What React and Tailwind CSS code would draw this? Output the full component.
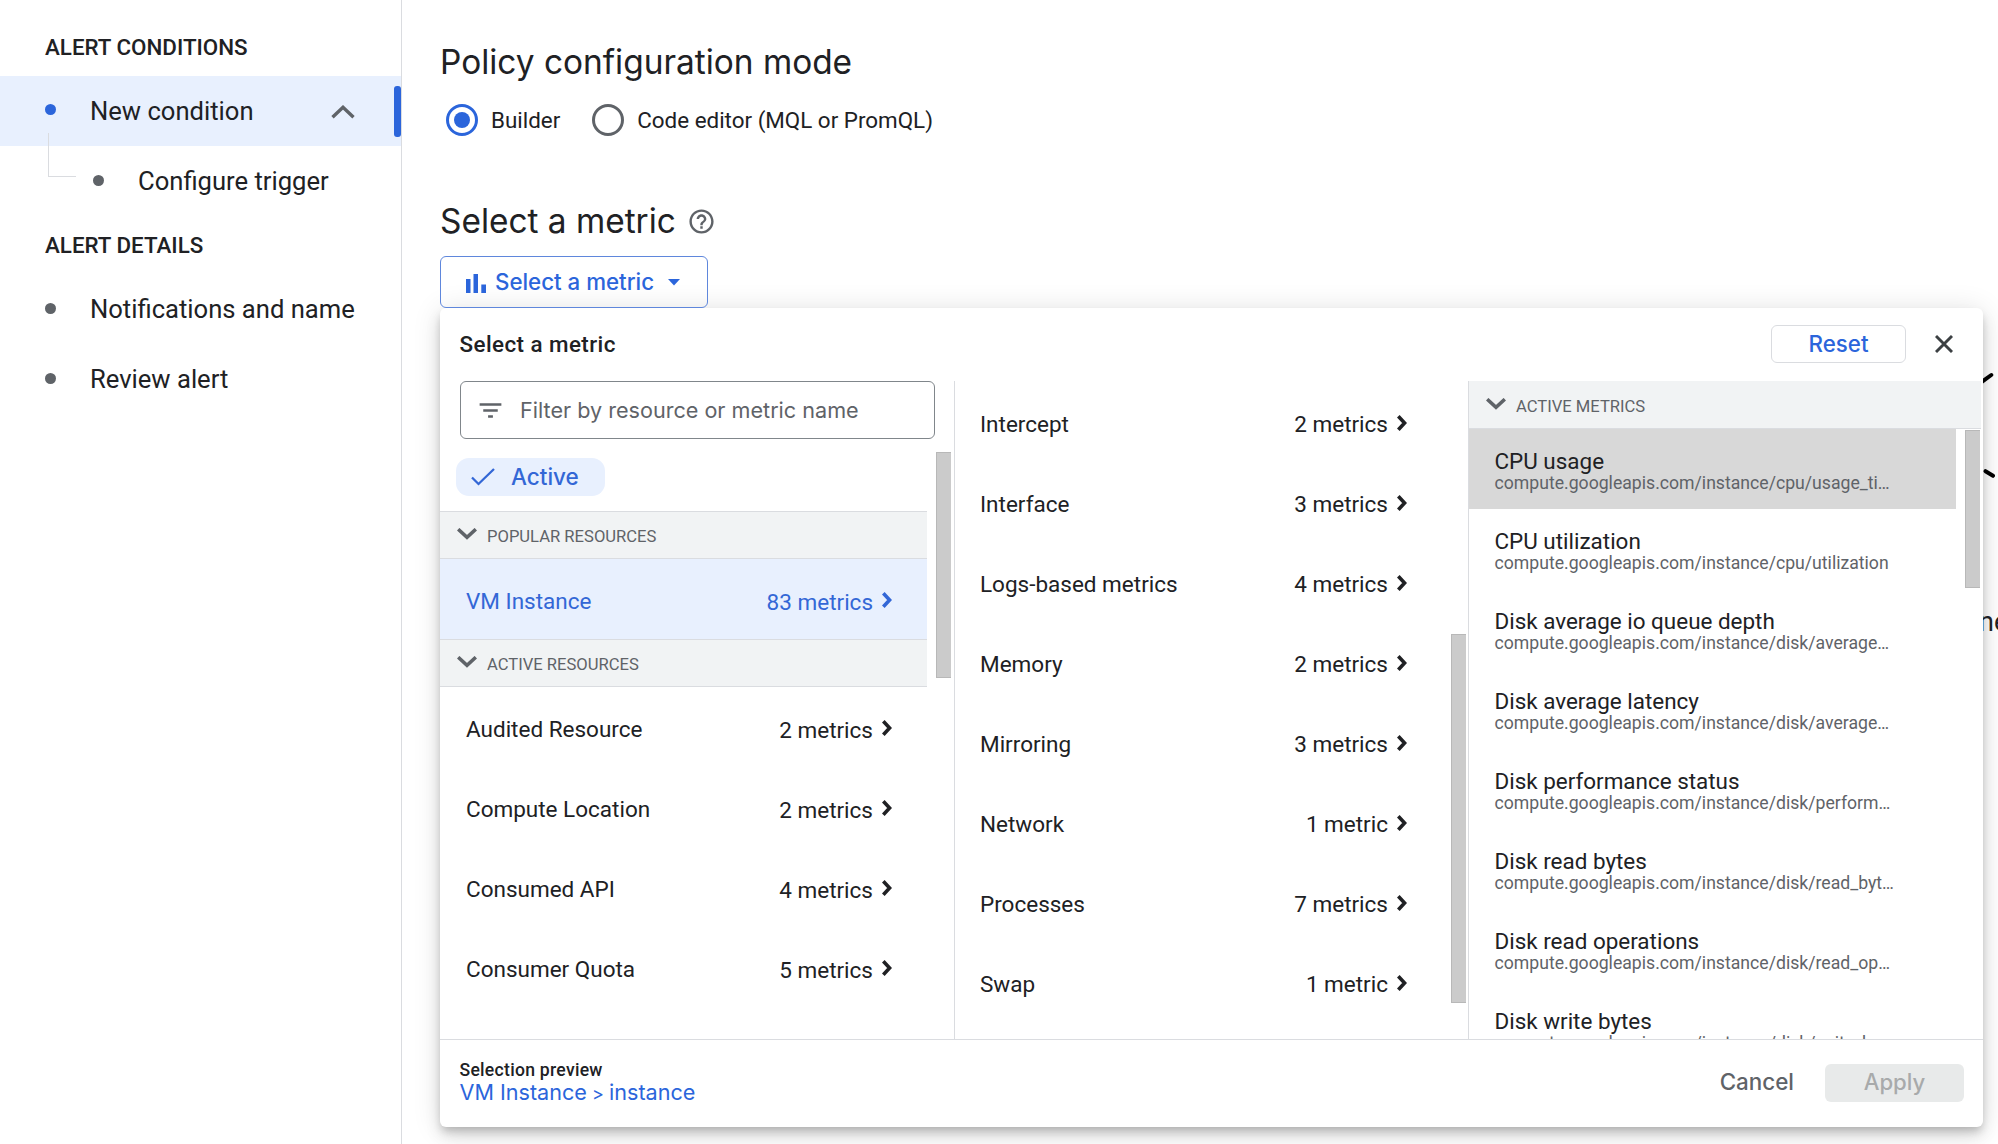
import React from "react";

const ROBOTO = "font-[Roboto,sans-serif]";
const INTER = "font-[Inter,sans-serif]";

const resources = [
  ["Audited Resource", "2 metrics"],
  ["Compute Location", "2 metrics"],
  ["Consumed API", "4 metrics"],
  ["Consumer Quota", "5 metrics"],
];

const categories = [
  ["Intercept", "2 metrics"],
  ["Interface", "3 metrics"],
  ["Logs-based metrics", "4 metrics"],
  ["Memory", "2 metrics"],
  ["Mirroring", "3 metrics"],
  ["Network", "1 metric"],
  ["Processes", "7 metrics"],
  ["Swap", "1 metric"],
];

const metrics = [
  ["CPU usage", "compute.googleapis.com/instance/cpu/usage_ti…"],
  ["CPU utilization", "compute.googleapis.com/instance/cpu/utilization"],
  ["Disk average io queue depth", "compute.googleapis.com/instance/disk/average…"],
  ["Disk average latency", "compute.googleapis.com/instance/disk/average…"],
  ["Disk performance status", "compute.googleapis.com/instance/disk/perform…"],
  ["Disk read bytes", "compute.googleapis.com/instance/disk/read_byt…"],
  ["Disk read operations", "compute.googleapis.com/instance/disk/read_op…"],
  ["Disk write bytes", "compute.googleapis.com/instance/disk/write_b…"],
];

function ChevronRight() {
  return (
    <svg width="10" height="16" viewBox="0 0 10 16" className="mt-[2px] shrink-0" fill="none" stroke="currentColor" strokeWidth="3.6">
      <path d="M1.3 1.3 7.6 8l-6.3 6.7" />
    </svg>
  );
}

function ChevronDown() {
  return (
    <svg width="20" height="12" viewBox="0 0 20 12" className="shrink-0 text-[#5f6368]" fill="none" stroke="currentColor" strokeWidth="3.5">
      <path d="M1.2 1.2 10 9.400l8.800-8.200" />
    </svg>
  );
}

function NavHeading({ children }) {
  return <div className="flex h-[58px] items-center pl-[45px] text-[22.35px] font-medium leading-none">{children}</div>;
}

function NavItem({ children, nested, active }) {
  return (
    <div className={`flex h-[70px] items-center text-[25.6px] leading-none ${nested ? "pl-[93px]" : "pl-[45px]"} ${active ? "bg-[#e8f0fe]" : ""}`}>
      <span className={`mr-[34px] size-[11px] shrink-0 rounded-full ${active ? "mb-[3px] bg-[#2b65db]" : "mb-[1px] bg-[#5f6368]"}`} />
      <span className="mt-[2px] whitespace-nowrap">{children}</span>
      {active && (
        <>
          <svg width="24" height="14" viewBox="0 0 24 14" className="ml-auto mr-[39px] mt-[1px]" fill="none" stroke="#5f6368" strokeWidth="3.4">
            <path d="M1.5 12.3 12 2.3l10.5 10" />
          </svg>
          <span className="h-[51px] w-[7px] rounded-[3px] bg-[#2b65db]" />
        </>
      )}
    </div>
  );
}

function SectionHeader({ children, className = "", labelClass = "mt-[4px]" }) {
  return (
    <div className={`flex h-[48px] items-center border-b border-[#dadce0] bg-[#f1f3f4] pl-[17px] text-[16.6px] leading-none text-[#5f6368] ${className}`}>
      <span className="mb-[2px] mr-[10px]">
        <ChevronDown />
      </span>
      <span className={`whitespace-nowrap ${labelClass}`}>{children}</span>
    </div>
  );
}

function ListRow({ name, count, className, countClass = "" }) {
  return (
    <div className={`flex h-[80px] items-center text-[22.5px] leading-none ${className}`}>
      <span className="mt-[4px] whitespace-nowrap">{name}</span>
      <span className={`ml-auto whitespace-nowrap ${countClass}`}>{count}</span>
      <ChevronRight />
    </div>
  );
}

function ScrollThumb({ className }) {
  return <div className={`absolute w-[15px] border-l border-y border-[#b8b8b8] bg-[#cbcbcb] ${className}`} />;
}

export default function App() {
  return (
    <div className={`relative flex h-[1144px] w-[1998px] overflow-hidden bg-white text-[#202124] ${ROBOTO}`}>
      <aside className="relative w-[402px] shrink-0 border-r border-[#dadce0] pt-[18px]">
        <NavHeading>ALERT CONDITIONS</NavHeading>
        <NavItem active>New condition</NavItem>
        <NavItem nested>Configure trigger</NavItem>
        <NavHeading>ALERT DETAILS</NavHeading>
        <NavItem>Notifications and name</NavItem>
        <NavItem>Review alert</NavItem>
        {/* Connector between the condition and its trigger */}
        <div className="absolute left-[48px] top-[133px] h-[44px] w-[28px] border-b border-l border-[#dadce0]" />
      </aside>

      <main className="flex flex-1 flex-col pl-[38px]">
        <h1 className={`mt-[42px] h-[40px] whitespace-nowrap text-[33.4px] leading-[40px] ${INTER}`}>Policy configuration mode</h1>
        <div className="mt-[22px] flex h-[32px] items-center pl-[6px] text-[22.4px] leading-none">
          <span className="flex size-[32px] items-center justify-center rounded-full border-[3px] border-[#2b65db]">
            <span className="size-[16px] rounded-full bg-[#2b65db]" />
          </span>
          <span className="ml-[13px]">Builder</span>
          <span className="ml-[32px] size-[32px] rounded-full border-[3px] border-[#5f6368]" />
          <span className="ml-[13px] whitespace-nowrap">Code editor (MQL or PromQL)</span>
        </div>
        <div className="mt-[65px] flex h-[40px] items-center">
          <h2 className={`whitespace-nowrap text-[33.4px] leading-[40px] ${INTER}`}>Select a metric</h2>
          <svg width="29" height="29" viewBox="0 0 24 24" className="ml-[11px]" fill="#5f6368">
            <path d="M11 18h2v-2h-2v2zm1-16C6.48 2 2 6.48 2 12s4.48 10 10 10 10-4.48 10-10S17.52 2 12 2zm0 18c-4.41 0-8-3.59-8-8s3.59-8 8-8 8 3.59 8 8-3.59 8-8 8zm0-14c-2.21 0-4 1.79-4 4h2c0-1.1.9-2 2-2s2 .9 2 2c0 2-3 1.75-3 5h2c0-2.25 3-2.5 3-5 0-2.21-1.79-4-4-4z" />
          </svg>
        </div>
        <button className={`relative z-10 mt-[15px] flex h-[52px] w-[268px] items-center rounded-[6px] border border-[#5f87dc] pl-[25px] text-[22.3px] font-medium leading-none text-[#2b65db] ${INTER}`}>
          <svg width="20" height="19" viewBox="0 0 20 19" fill="currentColor" className="mt-[2px]">
            <path d="M0 5h4.500v14H0zM7.500 0H12v19H7.500zM15.300 10.500H20V19h-4.700z" />
          </svg>
          <span className="ml-[9px] whitespace-nowrap">Select a metric</span>
          <svg width="12" height="7" viewBox="0 0 12 7" fill="currentColor" className="ml-[14px]">
            <path d="M0 0h12L6 6.500z" />
          </svg>
        </button>

        <section className="relative flex h-[819px] w-[1543px] shrink-0 flex-col rounded-[6px] bg-white shadow-[0_5px_8px_-2px_rgba(0,0,0,0.2),0_10px_16px_rgba(0,0,0,0.1),0_2px_29px_rgba(0,0,0,0.12)]">
          <header className="flex h-[73px] items-center pl-[19.5px] pr-[30px]">
            <h3 className="whitespace-nowrap text-[22.4px] font-medium leading-none tracking-[0.43px]">Select a metric</h3>
            <button className={`mb-[1px] ml-auto h-[38px] w-[135px] rounded-[6px] border border-[#dadce0] text-[22.3px] font-medium leading-none text-[#2b65db] ${INTER}`}>Reset</button>
            <svg width="18" height="18" viewBox="0 0 18 18" className="mb-[2px] ml-[29px]" fill="none" stroke="#3c4043" strokeWidth="2.900">
              <path d="M1 1l16 16M17 1 1 17" />
            </svg>
          </header>

          <div className="flex h-[658px]">
            <div className="relative w-[515px] border-r border-[#dadce0]">
              <div className={`ml-[20px] flex h-[58px] w-[475px] items-center rounded-[6px] border border-[#80868b] pl-[15px] text-[21.6px] leading-none text-[#5f6368] ${INTER}`}>
                <svg width="29" height="29" viewBox="0 0 24 24" fill="currentColor">
                  <path d="M10 18h4v-2h-4v2zM3 6v2h18V6H3zm3 7h12v-2H6v2z" />
                </svg>
                <span className="ml-[15px] mt-[1px] whitespace-nowrap">Filter by resource or metric name</span>
              </div>
              <div className={`ml-[16px] mt-[19px] flex h-[38px] w-[149px] items-center rounded-[13px] bg-[#e8f0fe] pl-[15px] text-[22.5px] font-medium leading-none text-[#3367d6] ${INTER}`}>
                <svg width="24" height="18" viewBox="0 0 24 18" fill="none" stroke="currentColor" strokeWidth="2.300">
                  <path d="M1 9.500 7.500 16 23 1" />
                </svg>
                <span className="ml-[16px] mt-[1px]">Active</span>
              </div>
              <div className="mt-[15px] w-[487px]">
                <SectionHeader className="border-t">POPULAR RESOURCES</SectionHeader>
                <ListRow name="VM Instance" count="83 metrics" countClass="mr-[9px] mt-[6px]" className="bg-[#e8f0fe] pl-[26px] pr-[35px] text-[#3367d6]" />
                <SectionHeader className="border-t">ACTIVE RESOURCES</SectionHeader>
                {resources.map(([name, count]) => (
                  <ListRow key={name} name={name} count={count} countClass="mr-[9px] mt-[6px]" className="pl-[26px] pr-[35px]" />
                ))}
              </div>
              <ScrollThumb className="left-[496px] top-[71px] h-[226px]" />
            </div>

            <div className="relative w-[514px] border-r border-[#dadce0] pt-[1px]">
              {categories.map(([name, count]) => (
                <ListRow key={name} name={name} count={count} countClass="mr-[9px] mt-[4px]" className="pl-[25px] pr-[61px]" />
              ))}
              <ScrollThumb className="left-[496px] top-[253px] h-[369px]" />
            </div>

            <div className="relative w-[514px] overflow-hidden">
              <SectionHeader className="w-[512px]" labelClass="mt-[5px]">ACTIVE METRICS</SectionHeader>
              {metrics.map(([name, path], i) => (
                <div key={name} className={`flex h-[80px] w-[487px] flex-col pl-[25.500px] pt-[19px] ${i === 0 ? "bg-[#d8d8d8]" : ""}`}>
                  <div className="h-[25px] whitespace-nowrap text-[22.45px] leading-[26px]">{name}</div>
                  <div className="h-[20px] whitespace-nowrap text-[17.65px] leading-[20px] text-[#5f6368]">{path}</div>
                </div>
              ))}
              <ScrollThumb className="left-[496px] top-[49px] h-[158px]" />
            </div>
          </div>

          <footer className="flex h-[88px] items-center border-t border-[#dadce0] pb-[2px] pl-[19.500px] pr-[19px]">
            <div className="mb-[3px]">
              <div className="h-[22px] text-[17.6px] font-medium leading-[22px] tracking-[0.27px]">Selection preview</div>
              <div className={`h-[22px] whitespace-nowrap text-[21.6px] leading-[22px] text-[#2b65db] ${INTER}`}>
                VM Instance <span className="-mx-px text-[18px]">&gt;</span> instance
              </div>
            </div>
            <button className={`ml-auto text-[22.4px] font-medium leading-none text-[#5f6368] ${INTER}`}>Cancel</button>
            <button className={`ml-[31px] h-[38px] w-[139px] rounded-[6px] bg-[#e8eaea] text-[22.2px] font-medium leading-none text-[#a8aaab] ${INTER}`}>Apply</button>
          </footer>
        </section>
      </main>

      {/* Parts of the chart placeholder that show beside the panel */}
      <svg width="15" height="110" viewBox="0 0 15 110" className="absolute left-[1983px] top-[370px]" fill="none" stroke="#000" strokeWidth="4" strokeLinecap="round">
        <path d="M-2 12.400 8.300 5M2.500 101.200l7.500 4.600" />
      </svg>
      <div className="absolute left-[1983px] top-[606px] w-[15px] overflow-hidden">
        <span className="-ml-[4px] block w-[60px] text-[27px] leading-[32px]">ne</span>
      </div>
    </div>
  );
}
